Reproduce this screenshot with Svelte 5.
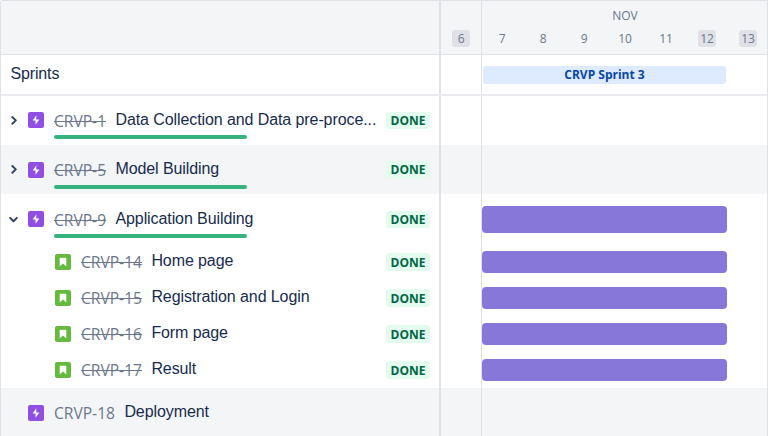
<script>
  const rows = [
    { key: 'CRVP-1', title: 'Data Collection and Data pre-proce...', kind: 'epic', h: 49, chevron: 'right' },
    { key: 'CRVP-5', title: 'Model Building', kind: 'epic', h: 49, chevron: 'right', shaded: true },
    { key: 'CRVP-9', title: 'Application Building', kind: 'epic', h: 50, chevron: 'down', bar: true },
    { key: 'CRVP-14', title: 'Home page', kind: 'story', h: 36, bar: true },
    { key: 'CRVP-15', title: 'Registration and Login', kind: 'story', h: 36, bar: true },
    { key: 'CRVP-16', title: 'Form page', kind: 'story', h: 36, bar: true },
    { key: 'CRVP-17', title: 'Result', kind: 'story', h: 36, bar: true },
    { key: 'CRVP-18', title: 'Deployment', kind: 'epic', h: 48, open: true, shaded: true }
  ];
  const days = [7, 8, 9, 10, 11, 12, 13];
</script>

<main class="roadmap">
  <header class="line header">
    <div class="left"></div>
    <div class="before"><span class="day off">6</span></div>
    <div class="month">
      <div class="name">NOV</div>
      <div class="days">
        {#each days as d}
          <div class="slot"><span class="day" class:off={d > 11}>{d}</span></div>
        {/each}
      </div>
    </div>
  </header>

  <section class="line sprints">
    <div class="left">Sprints</div>
    <div class="before"></div>
    <div class="month"><div class="sprint">CRVP Sprint 3</div></div>
  </section>

  {#each rows as r}
    <section class="line row {r.kind}" class:shaded={r.shaded} class:open={r.open} class:expanded={r.chevron === 'down'} style="height:{r.h}px">
      <div class="left">
        <div class="chevron">
          {#if r.chevron === 'right'}
            <svg width="12" height="12" viewBox="0 0 12 12"><path d="M4.3 3 7.8 6.4 4.3 9.8" /></svg>
          {:else if r.chevron === 'down'}
            <svg width="12" height="12" viewBox="0 0 12 12"><path d="M2.1 4.9 5.5 8.3 8.9 4.9" /></svg>
          {/if}
        </div>
        <svg class="icon" width="16" height="16" viewBox="0 0 16 16">
          {#if r.kind === 'epic'}
            <rect width="16" height="16" rx="2" fill="#904ee2" />
            <path d="M8.3 3.2 4.7 8.6h2.8v4.1l3.9-5.3H8.3z" fill="#fff" />
          {:else}
            <rect width="16" height="16" rx="2" fill="#63ba3c" />
            <path d="M5.2 3.7h5.6a.5.5 0 0 1 .5.5v8.3L8 9.6l-3.3 2.9V4.2a.5.5 0 0 1 .5-.5z" fill="#fff" />
          {/if}
        </svg>
        <div class="body">
          <div class="text">
            <span class="key" class:done={!r.open}>{r.key}</span>
            <span class="title">{r.title}</span>
          </div>
          {#if r.kind === 'epic' && !r.open}<div class="progress"></div>{/if}
        </div>
        {#if !r.open}<span class="status">DONE</span>{/if}
      </div>
      <div class="before"></div>
      <div class="month">
        {#if r.bar}<div class="bar"></div>{/if}
      </div>
    </section>
  {/each}
</main>

<style>
  .roadmap {
    box-sizing: border-box;
    width: 768px;
    height: 436px;
    overflow: hidden;
    background: #fff;
    border: 1px solid #dfe1e6;
    border-bottom: 0;
    border-radius: 3px 0 0 0;
    font-family: 'Open Sans', 'Noto Sans', sans-serif;
    color: #172b4d;
  }
  .line { display: flex; box-sizing: border-box; }
  .left { box-sizing: border-box; width: 440px; flex: none; border-right: 2px solid #dfe1e6; display: flex; }
  .before { box-sizing: border-box; width: 41px; flex: none; border-right: 1px solid #dfe1e6; }
  .month { flex: 1; min-width: 0; overflow: hidden; }
  .header { height: 54px; background: #f4f5f7; border-bottom: 1px solid #dfe1e6; color: #6b778c; }
  .header .before { padding: 29px 0 0 11px; }
  .name { height: 29px; width: 286px; text-align: center; font-size: 12px; line-height: 29px; }
  .days { display: flex; width: 287px; }
  .slot { width: 41px; flex: none; display: flex; padding-left: 11px; box-sizing: border-box; }
  .day { display: block; width: 18px; height: 17px; border-radius: 3px; font-size: 12px; line-height: 17px; text-align: center; letter-spacing: -0.2px; }
  .off { background: #dfe1e6; }
  .sprints { height: 41px; border-bottom: 2px solid #ebecf0; }
  .sprints .left { padding: 9px 0 0 9.5px; font: 16px/20px 'Liberation Sans', Arial, sans-serif; letter-spacing: -0.15px; }
  .sprint {
    width: 243px; height: 18px; margin: 11px 0 0 1px; border-radius: 3px; background: #deebff;
    color: #0747a6; font-size: 12px; font-weight: 700; line-height: 18px; text-align: center;
  }
  .shaded { background: #f4f5f7; }
  .chevron { width: 27px; flex: none; padding: 18px 0 0 7px; box-sizing: border-box; }
  .chevron svg { display: block; fill: none; stroke: #344563; stroke-width: 2; stroke-linecap: round; stroke-linejoin: round; }
  .icon { flex: none; margin: 16px 10px 0 0; }
  .body { flex: 1; min-width: 0; }
  .text { display: flex; height: 38px; white-space: nowrap; }
  .key { margin: 13px 9.4px 0 0; height: 24px; font-size: 15.6px; line-height: 24px; color: #6b778c; }
  .done { text-decoration: line-through; }
  .title { margin-top: 14px; height: 20px; font: 16px/20px 'Liberation Sans', Arial, sans-serif; letter-spacing: -0.09px; }
  .progress { width: 193px; height: 4px; border-radius: 2px; background: #36b37e; margin-top: 1px; }
  .status {
    flex: none; width: 44px; height: 17px; margin: 16px 9px 0 0; border-radius: 3px; background: #e3fcef;
    color: #006644; font-size: 12px; font-weight: 700; line-height: 17px; text-align: center;
  }
  .shaded .icon { margin-top: 17px; }
  .shaded .progress { margin-top: 2px; }
  .expanded .left { padding-top: 1px; }
  .story .chevron { width: 54px; }
  .story .icon { margin-top: 10px; }
  .story .key { margin-top: 6px; }
  .story .title { margin-top: 7px; }
  .story .status { margin-top: 9px; height: 18px; line-height: 19px; }
  .bar { width: 245px; height: 27px; margin-top: 12px; border-radius: 4px; background: #8777d9; }
  .story .bar { height: 22px; margin-top: 7px; }
</style>
